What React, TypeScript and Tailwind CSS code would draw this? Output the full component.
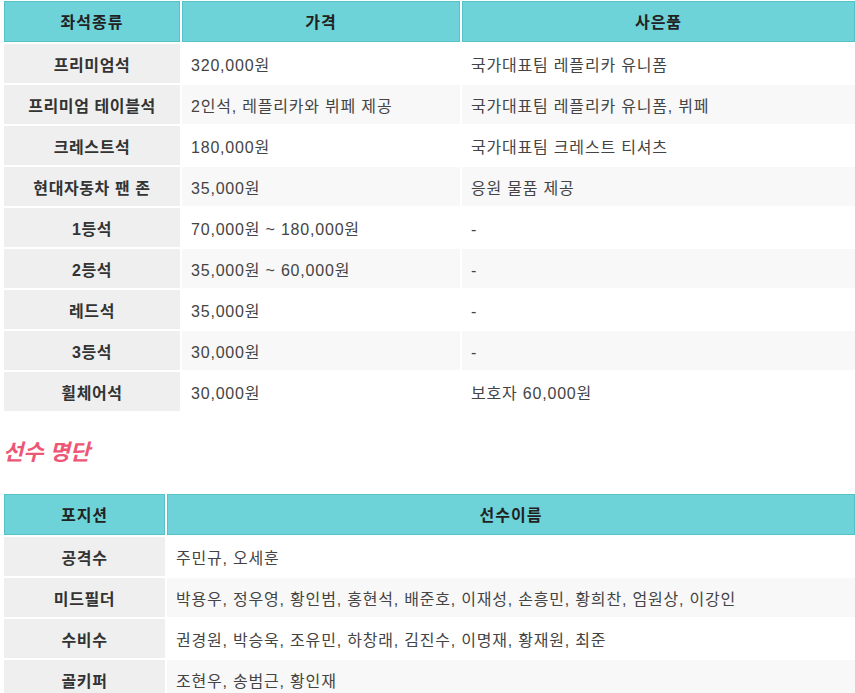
import React from 'react';

type Row = { label: string; cells: string[] };

const seatRows: Row[] = [
  { label: '프리미엄석', cells: ['320,000원', '국가대표팀 레플리카 유니폼'] },
  { label: '프리미엄 테이블석', cells: ['2인석, 레플리카와 뷔페 제공', '국가대표팀 레플리카 유니폼, 뷔페'] },
  { label: '크레스트석', cells: ['180,000원', '국가대표팀 크레스트 티셔츠'] },
  { label: '현대자동차 팬 존', cells: ['35,000원', '응원 물품 제공'] },
  { label: '1등석', cells: ['70,000원 ~ 180,000원', '-'] },
  { label: '2등석', cells: ['35,000원 ~ 60,000원', '-'] },
  { label: '레드석', cells: ['35,000원', '-'] },
  { label: '3등석', cells: ['30,000원', '-'] },
  { label: '휠체어석', cells: ['30,000원', '보호자 60,000원'] },
];

const playerRows: Row[] = [
  { label: '공격수', cells: ['주민규, 오세훈'] },
  { label: '미드필더', cells: ['박용우, 정우영, 황인범, 홍현석, 배준호, 이재성, 손흥민, 황희찬, 엄원상, 이강인'] },
  { label: '수비수', cells: ['권경원, 박승욱, 조유민, 하창래, 김진수, 이명재, 황재원, 최준'] },
  { label: '골키퍼', cells: ['조현우, 송범근, 황인재'] },
];

const HeadCell = ({ children, className }: { children: React.ReactNode; className: string }) => (
  <div
    className={`${className} h-[41px] pt-[2px] flex items-center justify-center bg-[#6dd3d8] border border-[#55c2c7] text-[16px] tracking-[1px] font-bold text-[#222]`}
  >
    {children}
  </div>
);

const InfoTable = ({
  heads,
  widths,
  rows,
}: {
  heads: string[];
  widths: string[];
  rows: Row[];
}) => (
  <div className="flex flex-col gap-[2px] pl-[4px]">
    <div className="flex gap-[2px]">
      {heads.map((h, i) => (
        <HeadCell key={h} className={widths[i]}>
          {h}
        </HeadCell>
      ))}
    </div>
    {rows.map((r, ri) => (
      <div key={r.label} className="flex gap-[2px] h-[39px]">
        <div
          className={`${widths[0]} pt-[4px] flex items-center justify-center bg-[#efefef] text-[16px] tracking-[0.6px] font-bold text-[#333]`}
        >
          {r.label}
        </div>
        {r.cells.map((c, ci) => (
          <div
            key={ci}
            className={`${widths[ci + 1]} pt-[4px] flex items-center pl-[9px] text-[16px] tracking-[0.8px] text-[#444] whitespace-nowrap ${
              ri % 2 === 1 ? 'bg-[#f8f8f8]' : 'bg-white'
            }`}
          >
            {c}
          </div>
        ))}
      </div>
    ))}
  </div>
);

export default function App() {
  return (
    <div
      className="h-[693px] w-[855px] overflow-hidden bg-white pt-px"
      style={{ fontFamily: '"Liberation Sans", "Noto Sans CJK KR", sans-serif' }}
    >
      <InfoTable
        heads={['좌석종류', '가격', '사은품']}
        widths={['w-[176px] shrink-0', 'w-[278px] shrink-0', 'flex-1']}
        rows={seatRows}
      />
      <h2 className="mt-[28px] mb-[27px] pl-[3px] text-[22px] leading-[28px] font-bold italic text-[#ee5676]">
        선수 명단
      </h2>
      <InfoTable
        heads={['포지션', '선수이름']}
        widths={['w-[161px] shrink-0', 'flex-1']}
        rows={playerRows}
      />
    </div>
  );
}
